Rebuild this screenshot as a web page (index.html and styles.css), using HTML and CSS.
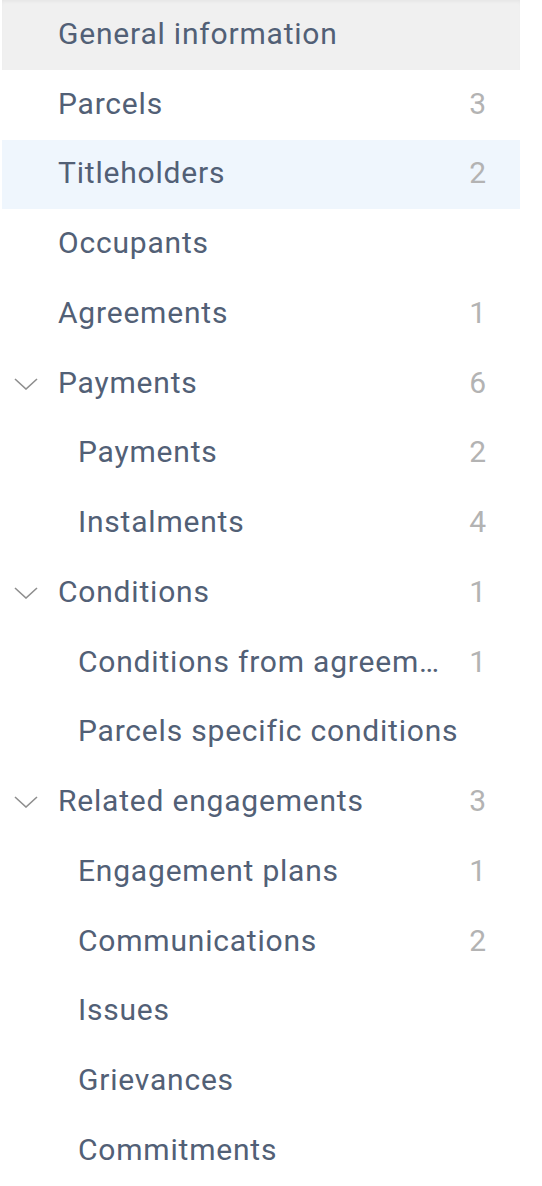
FILE: index.html
```html
<!DOCTYPE html>
<html>
<head>
<meta charset="utf-8">
<link rel="stylesheet" href="styles.css">
</head>
<body>
<nav class="menu">
  <div class="row row-active"><span class="label">General information</span></div>
  <div class="row"><span class="label">Parcels</span><span class="count">3</span></div>
  <div class="row row-selected"><span class="label">Titleholders</span><span class="count">2</span></div>
  <div class="row"><span class="label">Occupants</span></div>
  <div class="row"><span class="label">Agreements</span><span class="count">1</span></div>
  <div class="row"><svg class="chev" viewBox="0 0 24 12"><path d="M1 1 L12 11 L23 1"/></svg><span class="label">Payments</span><span class="count">6</span></div>
  <div class="row child"><span class="label">Payments</span><span class="count">2</span></div>
  <div class="row child"><span class="label">Instalments</span><span class="count">4</span></div>
  <div class="row"><svg class="chev" viewBox="0 0 24 12"><path d="M1 1 L12 11 L23 1"/></svg><span class="label">Conditions</span><span class="count">1</span></div>
  <div class="row child"><span class="label">Conditions from agreements</span><span class="count">1</span></div>
  <div class="row child"><span class="label">Parcels specific conditions</span></div>
  <div class="row"><svg class="chev" viewBox="0 0 24 12"><path d="M1 1 L12 11 L23 1"/></svg><span class="label">Related engagements</span><span class="count">3</span></div>
  <div class="row child"><span class="label">Engagement plans</span><span class="count">1</span></div>
  <div class="row child"><span class="label">Communications</span><span class="count">2</span></div>
  <div class="row child"><span class="label">Issues</span></div>
  <div class="row child"><span class="label">Grievances</span></div>
  <div class="row child"><span class="label">Commitments</span></div>
</nav>
</body>
</html>
```
FILE: styles.css
```css
html, body {
  margin: 0;
  padding: 0;
  background: #ffffff;
}
body {
  font-family: Roboto, "Liberation Sans", sans-serif;
}
.menu {
  display: flex;
  flex-direction: column;
  width: 518px;
  margin-left: 2px;
}
.row {
  position: relative;
  display: flex;
  align-items: center;
  box-sizing: border-box;
  height: 69.75px;
  padding: 0 34px 3px 56px;
  gap: 14px;
  font-size: 30px;
  letter-spacing: 0.8px;
  color: #526076;
}
.row.child {
  padding-left: 76px;
}
.row-active {
  background: #f0f0f0;
  box-shadow: inset 0 3px 4px -2px rgba(0,0,0,0.06);
}
.row-selected {
  background: #eff6fd;
}
.label {
  flex: 1;
  min-width: 0;
  white-space: nowrap;
  overflow: hidden;
  text-overflow: ellipsis;
}
.count {
  flex: none;
  color: #b3b3b3;
  letter-spacing: 0;
}
.chev {
  position: absolute;
  left: 12px;
  top: 50%;
  width: 24px;
  height: 12px;
  margin-top: -6px;
  fill: none;
  stroke: #8e8e8e;
  stroke-width: 1.6;
}
```
